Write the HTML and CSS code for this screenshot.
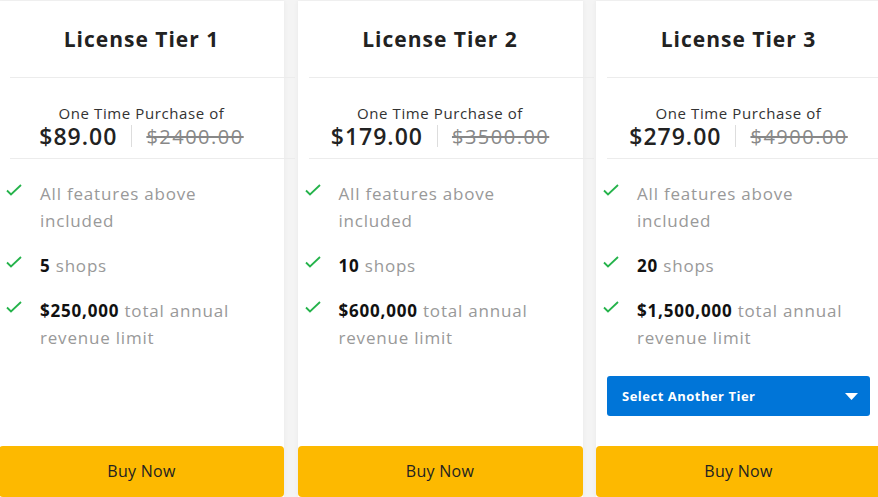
FILE: index.html
```html
<!DOCTYPE html>
<html lang="en">
<head>
    <meta charset="UTF-8">
    <meta name="viewport" content="width=device-width, initial-scale=1.0">
    <title>License Tiers</title>
    <link rel="stylesheet" href="styles.css">
</head>
<body>
    <div class="tiers">
        <div class="card">
            <div class="card-title">License Tier 1</div>
            <div class="divider"></div>
            <div class="price-block">
                <div class="price-label">One Time Purchase of</div>
                <div class="price-row">
                    <span class="price">$89.00</span>
                    <span class="price-old">$2400.00</span>
                </div>
            </div>
            <div class="divider"></div>
            <ul class="features">
                <li><svg class="check" viewBox="0 0 16 12"><path d="M1 6.5l4 4L15 1" fill="none" stroke="#25b34b" stroke-width="1.8"/></svg><span class="feature-text">All features above included</span></li>
                <li><svg class="check" viewBox="0 0 16 12"><path d="M1 6.5l4 4L15 1" fill="none" stroke="#25b34b" stroke-width="1.8"/></svg><span class="feature-text"><b>5</b> shops</span></li>
                <li><svg class="check" viewBox="0 0 16 12"><path d="M1 6.5l4 4L15 1" fill="none" stroke="#25b34b" stroke-width="1.8"/></svg><span class="feature-text"><b>$250,000</b> total annual revenue limit</span></li>
            </ul>
            <button class="buy-btn">Buy Now</button>
        </div>

        <div class="card">
            <div class="card-title">License Tier 2</div>
            <div class="divider"></div>
            <div class="price-block">
                <div class="price-label">One Time Purchase of</div>
                <div class="price-row">
                    <span class="price">$179.00</span>
                    <span class="price-old">$3500.00</span>
                </div>
            </div>
            <div class="divider"></div>
            <ul class="features">
                <li><svg class="check" viewBox="0 0 16 12"><path d="M1 6.5l4 4L15 1" fill="none" stroke="#25b34b" stroke-width="1.8"/></svg><span class="feature-text">All features above included</span></li>
                <li><svg class="check" viewBox="0 0 16 12"><path d="M1 6.5l4 4L15 1" fill="none" stroke="#25b34b" stroke-width="1.8"/></svg><span class="feature-text"><b>10</b> shops</span></li>
                <li><svg class="check" viewBox="0 0 16 12"><path d="M1 6.5l4 4L15 1" fill="none" stroke="#25b34b" stroke-width="1.8"/></svg><span class="feature-text"><b>$600,000</b> total annual revenue limit</span></li>
            </ul>
            <button class="buy-btn">Buy Now</button>
        </div>

        <div class="card">
            <div class="card-title">License Tier 3</div>
            <div class="divider"></div>
            <div class="price-block">
                <div class="price-label">One Time Purchase of</div>
                <div class="price-row">
                    <span class="price">$279.00</span>
                    <span class="price-old">$4900.00</span>
                </div>
            </div>
            <div class="divider"></div>
            <ul class="features">
                <li><svg class="check" viewBox="0 0 16 12"><path d="M1 6.5l4 4L15 1" fill="none" stroke="#25b34b" stroke-width="1.8"/></svg><span class="feature-text">All features above included</span></li>
                <li><svg class="check" viewBox="0 0 16 12"><path d="M1 6.5l4 4L15 1" fill="none" stroke="#25b34b" stroke-width="1.8"/></svg><span class="feature-text"><b>20</b> shops</span></li>
                <li><svg class="check" viewBox="0 0 16 12"><path d="M1 6.5l4 4L15 1" fill="none" stroke="#25b34b" stroke-width="1.8"/></svg><span class="feature-text"><b>$1,500,000</b> total annual revenue limit</span></li>
            </ul>
            <div class="tier-select">
                <span>Select Another Tier</span>
                <svg class="caret" width="13" height="7" viewBox="0 0 13 7"><path d="M0 0h13L6.5 7z" fill="#fff"/></svg>
            </div>
            <button class="buy-btn">Buy Now</button>
        </div>
    </div>
</body>
</html>
```

FILE: styles.css
```css
body {
    margin: 0;
    background-color: #f4f4f4;
    font-family: "Open Sans", "Noto Sans", sans-serif;
    color: #222;
    overflow: hidden;
}

.tiers {
    display: grid;
    grid-template-columns: repeat(3, 285px);
    column-gap: 13.5px;
    margin-left: -1px;
    padding-top: 1px;
}

.card {
    background-color: #fff;
    height: 496px;
    display: flex;
    flex-direction: column;
    box-shadow: 0 0 5px rgba(0, 0, 0, 0.05);
}

.card-title {
    height: 76px;
    display: flex;
    align-items: center;
    justify-content: center;
    font-size: 21px;
    font-weight: 700;
    letter-spacing: 1px;
    color: #222;
}

.divider {
    height: 1px;
    background-color: #ececec;
    margin: 0 -11px 0 11px;
}

.price-block {
    text-align: center;
    padding: 25px 0 9px;
}

.price-label {
    font-size: 15px;
    line-height: 20px;
    letter-spacing: 0.6px;
    color: #333;
}

.price-row {
    display: flex;
    justify-content: center;
    align-items: center;
    height: 26px;
}

.price {
    font-size: 23px;
    font-weight: 600;
    letter-spacing: 1px;
    color: #222;
    padding-right: 14px;
    border-right: 1px solid #ddd;
    line-height: 22px;
}

.price-old {
    font-size: 20px;
    letter-spacing: 1.5px;
    color: #888;
    text-decoration: line-through;
    padding-left: 14px;
}

.features {
    list-style: none;
    margin: 0;
    padding: 21px 0 0;
}

.features li {
    display: flex;
    margin-bottom: 18px;
}

.check {
    width: 16px;
    height: 12px;
    margin: 4px 0 0 7px;
    flex-shrink: 0;
}

.feature-text {
    margin-left: 18px;
    padding-right: 30px;
    font-size: 17px;
    line-height: 27px;
    letter-spacing: 0.8px;
    color: #999;
}

.feature-text b {
    color: #111;
    font-weight: 700;
}

.tier-select {
    margin: 7px 11px 0;
    height: 40px;
    border-radius: 3px;
    background-color: #0075d8;
    color: #fff;
    font-size: 13px;
    font-weight: 700;
    letter-spacing: 0.5px;
    display: flex;
    align-items: center;
    justify-content: space-between;
    padding: 0 12px 0 15px;
}

.buy-btn {
    margin-top: auto;
    height: 51px;
    padding-bottom: 3px;
    border: none;
    border-radius: 4px;
    background-color: #fdb900;
    color: #222;
    font-family: inherit;
    font-size: 16px;
    font-weight: 500;
    letter-spacing: 0.3px;
    cursor: pointer;
}
```
